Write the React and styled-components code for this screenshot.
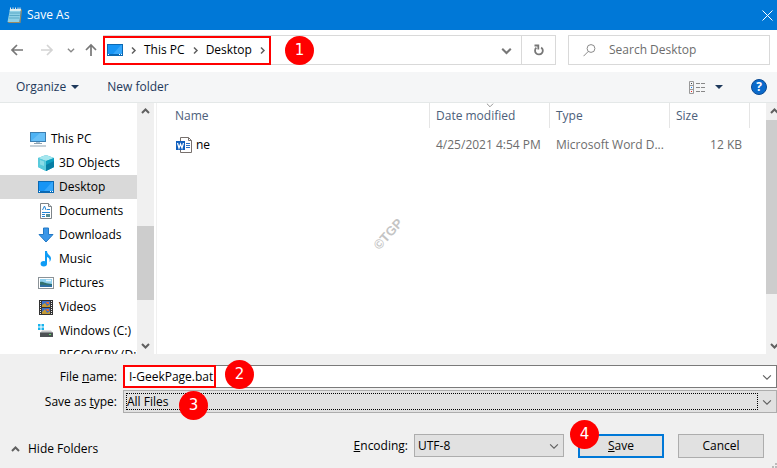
import React, { useState } from "react";
import styled, { createGlobalStyle } from "styled-components";

const places = [
  { name: "This PC", icon: "pc", root: true },
  { name: "3D Objects", icon: "cube" },
  { name: "Desktop", icon: "desktop" },
  { name: "Documents", icon: "document" },
  { name: "Downloads", icon: "download" },
  { name: "Music", icon: "music" },
  { name: "Pictures", icon: "picture" },
  { name: "Videos", icon: "video" },
  { name: "Windows (C:)", icon: "drive" },
  { name: "RECOVERY (D:)", icon: "blank" },
];

const files = [
  {
    name: "ne",
    date: "4/25/2021 4:54 PM",
    type: "Microsoft Word D...",
    size: "12 KB",
  },
];

const chevrons = {
  up: "M1 6 L4.5 2.5 L8 6",
  down: "M1 3 L4.5 6.5 L8 3",
  right: "M3 1.5 L6 4.5 L3 7.5",
};

const Chevron = ({ dir, size = 9, color = "#606060", weight = 1.5 }) => (
  <svg width={size} height={size} viewBox="0 0 9 9" fill="none">
    <path d={chevrons[dir]} stroke={color} strokeWidth={weight} />
  </svg>
);

const Arrow = ({ turn = 0, color }) => (
  <svg width="14" height="14" viewBox="0 0 14 14" fill="none">
    <path
      d="M13 7 H2 M7 2 L2 7 L7 12"
      stroke={color}
      strokeWidth="1.7"
      transform={`rotate(${turn} 7 7)`}
    />
  </svg>
);

const icons = {
  blank: null,
  pc: (
    <>
      <rect x="0.5" y="1.5" width="15" height="9" fill="#4db3f5" stroke="#3c7fb1" />
      <path d="M1 10 L10 2 H15 V10 Z" fill="#7cc8f8" opacity="0.6" />
      <path d="M6 11 H10 V12.5 H6 Z" fill="#a9c4d8" />
      <path d="M4 12.5 H12 M0 15 H16" stroke="#8fa3b1" />
    </>
  ),
  cube: (
    <>
      <path d="M8 0 L16 3 V12 L8 16 L0 12 V3 Z" fill="#35b8cf" />
      <path d="M8 0 L16 3 L8 6 L0 3 Z" fill="#a5e6ee" />
      <path d="M0 3 L8 6 V16 L0 12 Z" fill="#5acbdc" />
      <path d="M8 6 L16 3 V12 L8 16 Z" fill="#0e9fc0" />
      <path d="M8 10 L16 6 V12 L8 16 Z" fill="#087ea4" />
      <path d="M2 5 L6 6.5 V11 L2 9.5 Z" fill="#8adde7" />
    </>
  ),
  desktop: (
    <>
      <rect x="0.5" y="2.5" width="15" height="11" fill="#1795f5" stroke="#0b69b3" />
      <path d="M6 12 L14 3 H15 V12 Z" fill="#35a7fb" />
      <path d="M1 12.5 H15" stroke="#0b69b3" />
      <path d="M1 12.5 H2 M12 12.5 H13 M14 12.5 H15" stroke="#fff" />
    </>
  ),
  document: (
    <>
      <path d="M2.5 0.5 H10.5 L13.5 3.5 V15.5 H2.5 Z" fill="#fff" stroke="#7d8489" />
      <path d="M10.5 0.5 V3.5 H13.5" fill="#e2e6e9" stroke="#7d8489" />
      <path d="M4.5 7 L6.5 3 L8 7 M4 9.5 H12 M4 11.5 H7 M4 13.5 H7 M9 6.5 H12" stroke="#2385d5" fill="none" />
      <rect x="8" y="11" width="4" height="3" fill="#568d94" />
    </>
  ),
  download: (
    <path d="M5.5 1 H10.5 V7.5 H15 L8 15 L1 7.5 H5.5 Z" fill="#3b97e8" stroke="#2379c5" />
  ),
  music: (
    <>
      <path d="M7 0 H9 C9 4 13 4 13 7.5 C13 9 12 10.5 11.5 11 C12 8 11 6.5 9 6 V12.5 H7 Z" fill="#0f9cf5" />
      <ellipse cx="5.8" cy="12.8" rx="3.2" ry="2.7" fill="#0f9cf5" />
    </>
  ),
  picture: (
    <>
      <rect x="0.5" y="2.5" width="15" height="11" fill="#fff" stroke="#8b9297" />
      <rect x="2" y="4" width="12" height="8" fill="#8fd0ef" />
      <path d="M2 7 C5 6 7 9 14 9 V12 H2 Z" fill="#33716e" />
      <path d="M2 10 C6 9 10 11 14 10 V12 H2 Z" fill="#2f6fa4" />
      <path d="M8 5.5 H13" stroke="#e7f6fb" strokeWidth="1.5" />
    </>
  ),
  video: (
    <>
      <rect x="1" y="1" width="14" height="15" fill="#333" />
      <path d="M2.5 2 V16 M13.5 2 V16" stroke="#eee" strokeDasharray="1 1" />
      <path d="M4 2 H12 V8 H4 Z M4 9 H12 V15 H4 Z" fill="#3a6fc9" />
      <path d="M4 6 L7 4 L9 7 L12 5 V8 H4 Z M4 13 L7 10 L9 14 L12 12 V15 H4 Z" fill="#c59a33" />
      <path d="M8 3 H11 V5 H9 Z M8 10 H11 V12 H9 Z" fill="#e8682a" />
    </>
  ),
  drive: (
    <>
      <path d="M0 1 H2.5 V3.5 H0 Z M3.5 1 H6 V3.5 H3.5 Z M0 4.5 H2.5 V7 H0 Z M3.5 4.5 H6 V7 H3.5 Z" fill="#18b4ee" />
      <path d="M4 7.5 H13 L15 10 H2 Z" fill="#c3c6c8" />
      <rect x="2" y="9.5" width="13" height="4.5" fill="#4c5154" />
      <path d="M11 11.5 H13" stroke="#5fe06a" />
    </>
  ),
  word: (
    <>
      <path d="M4.5 0.5 H12.5 L15.5 3.5 V15.5 H4.5 Z" fill="#fff" stroke="#77706d" />
      <path d="M12.5 0.5 V3.5 H15.5" fill="none" stroke="#77706d" />
      <path d="M10 6.5 H14 M10 8.5 H14 M10 10.5 H14" stroke="#2a70c4" />
      <rect x="0" y="4" width="9" height="9" fill="#0f5fbe" />
      <path d="M1.5 6 L3 11 L4.5 7 L6 11 L7.5 6" fill="none" stroke="#fff" strokeWidth="1.2" />
    </>
  ),
  notepad: (
    <>
      <path d="M3 2 H14 L12.5 15 H0.5 Z" fill="#8fd0e6" />
      <path d="M3 2 H14 L13.8 4 H2.7 Z" fill="#d8eef2" />
      <path d="M14 2 L15 3 L13.5 16 H2 L0.5 15 H12.5 Z" fill="#9b8b62" />
      <path d="M2.7 6 H13 M2.4 8.5 H12.7 M2 11 H12.5" stroke="#5ba9c6" />
      <path d="M3.5 0.5 V3 M6 0.5 V3 M8.5 0.5 V3 M11 0.5 V3 M13 0.5 V3" stroke="#e9e9e9" />
    </>
  ),
};

const Icon = ({ name }) => (
  <svg width="16" height="16" viewBox="0 0 16 16" aria-hidden="true">
    {icons[name]}
  </svg>
);

const ScrollBar = ({ before, thumb, after }) => (
  <Track>
    <ScrollButton aria-label="Scroll up">
      <Chevron dir="up" weight={2} />
    </ScrollButton>
    <Space $grow={before} />
    <Thumb $grow={thumb} />
    <Space $grow={after} />
    <ScrollButton aria-label="Scroll down">
      <Chevron dir="down" weight={2} />
    </ScrollButton>
  </Track>
);

const App = () => {
  const [fileName, setFileName] = useState("I-GeekPage.bat");
  const [place, setPlace] = useState("Desktop");

  return (
    <>
      <GlobalStyle />
      <Dialog>
        <TitleBar>
          <Icon name="notepad" />
          <Title>Save As</Title>
          <CloseButton aria-label="Close">
            <svg width="11" height="11" viewBox="0 0 11 11">
              <path d="M0.5 0.5 L10.5 10.5 M10.5 0.5 L0.5 10.5" stroke="#fff" />
            </svg>
          </CloseButton>
        </TitleBar>

        <NavBar>
          <Moves>
            <NavButton $w={24} aria-label="Back">
              <Arrow color="#777" />
            </NavButton>
            <NavButton $w={24} aria-label="Forward">
              <Arrow color="#d4d4d4" turn={180} />
            </NavButton>
            <NavButton $w={12} aria-label="Recent locations">
              <Chevron dir="down" size={8} color="#8a8a8a" />
            </NavButton>
            <NavButton $w={16} aria-label="Up">
              <Arrow color="#777" turn={90} />
            </NavButton>
          </Moves>
          <Address>
            <Crumbs aria-label="Path">
              <Icon name="desktop" />
              <Chevron dir="right" />
              <Crumb href="#this-pc">This PC</Crumb>
              <Chevron dir="right" />
              <Crumb href="#desktop">Desktop</Crumb>
              <Chevron dir="right" />
              <CrumbsMark />
              <Badge $x={181} $y={0}>1</Badge>
            </Crumbs>
            <NavButton $w={30} aria-label="Previous locations">
              <Chevron dir="down" size={11} color="#777" weight={1.7} />
            </NavButton>
            <RefreshButton $w={34} aria-label="Refresh">
              <svg width="12" height="12" viewBox="0 0 12 12" fill="none">
                <path d="M8.2 3.4 A3.9 3.9 0 1 1 3.4 3.6" stroke="#777" strokeWidth="1.8" />
                <path d="M1.5 1.5 H5.3 V5.4" stroke="#777" strokeWidth="1.8" />
              </svg>
            </RefreshButton>
          </Address>
          <Search>
            <svg width="13" height="13" viewBox="0 0 13 13" fill="none">
              <circle cx="8" cy="4.5" r="3.9" stroke="#8a8a8a" />
              <path d="M5.2 7.5 L0.5 12.2" stroke="#8a8a8a" />
            </svg>
            <SearchInput aria-label="Search Desktop" placeholder="Search Desktop" />
          </Search>
        </NavBar>

        <ToolBar>
          <ToolButton>
            Organize
            <svg width="8" height="4" viewBox="0 0 8 4">
              <path d="M0 0 H8 L4 4 Z" fill="#1e395b" />
            </svg>
          </ToolButton>
          <ToolButton>New folder</ToolButton>
          <ViewButton aria-label="Change your view">
            <svg width="17" height="13" viewBox="0 0 17 13" fill="none">
              <path d="M0.5 0.5 H4.5 V12.5 H0.5 Z M0 4.5 H5 M0 8.5 H5" stroke="#999" />
              <path d="M7 2.5 H11 M12 2.5 H16 M7 6.5 H11 M12 6.5 H16 M7 10.5 H11 M12 10.5 H16" stroke="#888" />
              <path d="M2 2.5 H3" stroke="#444" />
              <path d="M2 6.5 H3" stroke="#0a84ff" />
              <path d="M2 10.5 H3" stroke="#e22" />
            </svg>
            <svg width="8" height="4" viewBox="0 0 8 4">
              <path d="M0 0 H8 L4 4 Z" fill="#1e395b" />
            </svg>
          </ViewButton>
          <HelpButton aria-label="Help">?</HelpButton>
        </ToolBar>

        <Content>
          <Sidebar>
            <Places>
              {places.map((p) => (
                <li key={p.name}>
                  <Place
                    $root={p.root}
                    $active={p.name === place}
                    onClick={() => setPlace(p.name)}
                  >
                    <Icon name={p.icon} />
                    {p.name}
                  </Place>
                </li>
              ))}
            </Places>
            <ScrollBar before={106} thumb={74} after={37} />
          </Sidebar>
          <FilePane>
            <FileTable>
              <thead>
                <tr>
                  <Head>Name</Head>
                  <Head $w={120}>
                    Date modified
                    <SortMark>
                      <Chevron dir="down" size={8} color="#888" weight={1} />
                    </SortMark>
                  </Head>
                  <Head $w={120}>Type</Head>
                  <Head $w={80}>Size</Head>
                  <Filler />
                </tr>
              </thead>
              <tbody>
                {files.map((f) => (
                  <tr key={f.name}>
                    <Cell>
                      <FileLabel>
                        <Icon name="word" />
                        {f.name}
                      </FileLabel>
                    </Cell>
                    <Cell>{f.date}</Cell>
                    <Cell>{f.type}</Cell>
                    <Cell $right>{f.size}</Cell>
                    <td />
                  </tr>
                ))}
              </tbody>
            </FileTable>
            <Watermark>©TGP</Watermark>
          </FilePane>
          <ScrollBar before={0} thumb={174} after={43} />
        </Content>

        <Footer>
          <Fields>
            <Label htmlFor="file-name">
              File <u>n</u>ame:
            </Label>
            <NameField>
              <NameInput
                id="file-name"
                value={fileName}
                onChange={(e) => setFileName(e.target.value)}
              />
              <FieldArrow>
                <Chevron dir="down" size={10} weight={1} />
              </FieldArrow>
              <NameMark />
              <Badge $x={101} $y={-6}>2</Badge>
            </NameField>
            <Label htmlFor="file-type">
              Save as <u>t</u>ype:
            </Label>
            <SelectField>
              <TypeSelect id="file-type">
                <option>All Files</option>
              </TypeSelect>
              <FieldArrow>
                <Chevron dir="down" size={10} weight={1} />
              </FieldArrow>
              <Badge $x={55} $y={0}>3</Badge>
            </SelectField>
          </Fields>

          <Actions>
            <HideButton>
              <Chevron dir="up" weight={2} />
              Hide Folders
            </HideButton>
            <Encoding>
              <Label htmlFor="encoding">
                <u>E</u>ncoding:
              </Label>
              <SelectField $w={150}>
                <Select id="encoding">
                  <option>UTF-8</option>
                </Select>
                <FieldArrow>
                  <Chevron dir="down" size={10} weight={1} />
                </FieldArrow>
              </SelectField>
            </Encoding>
            <SaveBox>
              <Button $primary>
                <u>S</u>ave
              </Button>
              <Badge $x={-8} $y={-14}>4</Badge>
            </SaveBox>
            <Button>Cancel</Button>
          </Actions>
          <Grip width="5" height="5" viewBox="0 0 5 5">
            <path d="M3 0 H5 V2 H3 Z M3 3 H5 V5 H3 Z M0 3 H2 V5 H0 Z" fill="#bbb" />
          </Grip>
        </Footer>
      </Dialog>
    </>
  );
};

export default App;

const GlobalStyle = createGlobalStyle`
  * {
    box-sizing: border-box;
  }

  body {
    margin: 0;
    overflow: hidden;
  }

  body, button, input, select {
    font-family: "Open Sans", "Noto Sans", sans-serif;
    font-size: 12px;
    line-height: 16px;
    color: #000;
  }

  button {
    padding: 0;
    border: 0;
    background: none;
  }

  svg {
    display: block;
    flex-shrink: 0;
  }
`;

const Dialog = styled.main`
  display: flex;
  flex-direction: column;
  height: 100vh;
  background: #fff;
`;

const TitleBar = styled.header`
  display: flex;
  align-items: center;
  height: 30px;
  padding: 0 2px 0 7px;
  gap: 4px;
  background: #0078d7;
`;

const Title = styled.h1`
  margin: 0;
  flex: 1;
  font-size: 12px;
  font-weight: 400;
  color: #fff;
`;

const CloseButton = styled.button`
  padding: 2px;
`;

const NavBar = styled.nav`
  display: flex;
  padding: 5px 7px 7px 5px;
`;

const Moves = styled.div`
  display: flex;
  gap: 6px;
  margin-right: 4px;
`;

const NavButton = styled.button`
  display: flex;
  align-items: center;
  justify-content: center;
  width: ${({ $w }) => $w}px;
`;

const Address = styled.div`
  display: flex;
  flex: 1;
  height: 30px;
  margin-right: 12px;
  border: 1px solid #d9d9d9;
`;

const Crumbs = styled.div`
  position: relative;
  display: flex;
  align-items: center;
  gap: 6px;
  margin-right: auto;
  padding: 0 4px 0 3px;
`;

const Crumb = styled.a`
  color: #000;
  text-decoration: none;
`;

const CrumbsMark = styled.div`
  position: absolute;
  inset: 0 0 -1px -1px;
  border: 2px solid #f00;
  pointer-events: none;
`;

const Badge = styled.span`
  position: absolute;
  z-index: 1;
  left: ${({ $x }) => $x}px;
  top: ${({ $y }) => $y}px;
  width: 29px;
  height: 29px;
  border-radius: 50%;
  background: #f00;
  color: #fff;
  font: 15px/29px "DejaVu Sans", sans-serif;
  text-align: center;
  pointer-events: none;
`;

const RefreshButton = styled(NavButton)`
  border-left: 1px solid #d9d9d9;
`;

const Search = styled.div`
  display: flex;
  align-items: center;
  gap: 13px;
  width: 202px;
  padding-left: 14px;
  border: 1px solid #d9d9d9;
`;

const SearchInput = styled.input`
  flex: 1;
  min-width: 0;
  padding: 0;
  border: 0;
  outline: 0;

  &::placeholder {
    color: #6d6d6d;
    opacity: 1;
  }
`;

const ToolBar = styled.div`
  display: flex;
  align-items: center;
  gap: 28px;
  height: 31px;
  padding: 0 10px 0 16px;
  background: #f5f6f7;
  border-bottom: 1px solid #e4e8e8;
`;

const ToolButton = styled.button`
  display: flex;
  align-items: center;
  gap: 5px;
  color: #1e395b;
`;

const ViewButton = styled(ToolButton)`
  gap: 9px;
  margin-left: auto;
`;

const HelpButton = styled.button`
  width: 16px;
  height: 16px;
  border: 1px solid #0a4a94;
  border-radius: 50%;
  background: #0a6acb;
  color: #fff;
  font-weight: 700;
  line-height: 14px;
`;

const Content = styled.div`
  display: flex;
  flex: 1;
  min-height: 0;
  overflow: hidden;

  & > :last-child {
    margin-right: -6px;
  }
`;

const Sidebar = styled.aside`
  display: flex;
  width: 157px;
  flex-shrink: 0;
  padding-right: 2px;
  border-right: 1px solid #f0f0f0;
`;

const Places = styled.ul`
  flex: 1;
  min-width: 0;
  margin: 0;
  padding: 24px 0 0;
  list-style: none;
  overflow: hidden;
`;

const Place = styled.button`
  display: flex;
  align-items: center;
  gap: 5px;
  width: 100%;
  height: 24px;
  padding-left: ${({ $root }) => ($root ? 30 : 38)}px;
  overflow: hidden;
  white-space: nowrap;
  background: ${({ $active }) => ($active ? "#d9d9d9" : "none")};
`;

const Track = styled.div`
  display: flex;
  flex-direction: column;
  width: 17px;
  flex-shrink: 0;
  background: #f0f0f0;
`;

const ScrollButton = styled.button`
  display: flex;
  align-items: center;
  justify-content: center;
  height: 17px;
`;

const Space = styled.div`
  flex: ${({ $grow }) => $grow} 1 0;
`;

const Thumb = styled(Space)`
  background: #cdcdcd;
`;

const FilePane = styled.section`
  position: relative;
  flex: 1;
  min-width: 0;
`;

const FileTable = styled.table`
  width: 100%;
  table-layout: fixed;
  border-collapse: separate;
  border-spacing: 0;
`;

const Head = styled.th`
  position: relative;
  width: ${({ $w }) => ($w ? `${$w}px` : "auto")};
  height: 25px;
  padding: 0 0 0 6px;
  border-right: 1px solid #e5e5e5;
  font-weight: 400;
  text-align: left;
  color: #4c607a;

  &:first-child {
    padding-left: 18px;
  }
`;

const Filler = styled.td`
  width: 16px;
`;

const SortMark = styled.span`
  position: absolute;
  top: -2px;
  left: 50%;
  transform: translateX(-50%);
`;

const Cell = styled.td`
  height: 34px;
  padding: 0 8px 0 6px;
  white-space: nowrap;
  text-align: ${({ $right }) => ($right ? "right" : "left")};
  color: #6d6d6d;

  &:nth-child(3) {
    padding-right: 0;
  }

  &:first-child {
    padding-left: 19px;
    color: #000;
  }
`;

const FileLabel = styled.span`
  display: flex;
  align-items: center;
  gap: 4px;
`;

const Watermark = styled.span`
  position: absolute;
  top: 52%;
  left: 38%;
  transform: translate(-50%, -50%) rotate(-48deg);
  font: 700 13px "Liberation Sans Narrow", "Liberation Sans", sans-serif;
  color: #c4c4c4;
`;

const Footer = styled.footer`
  position: relative;
  padding: 11px 0 10px;
  background: #f0f0f0;
`;

const Fields = styled.div`
  display: grid;
  grid-template-columns: 117px 1fr;
  gap: 2px 6px;
`;

const Label = styled.label`
  line-height: 23px;
  text-align: right;
`;

const Field = styled.div`
  position: relative;
  display: flex;
  height: 23px;
`;

const NameField = styled(Field)`
  background: #fff;
  border: 1px solid #7a7a7a;
`;

const NameInput = styled.input`
  flex: 1;
  min-width: 0;
  padding: 0 5px;
  border: 0;
  outline: 0;
  background: none;
`;

const NameMark = styled.div`
  position: absolute;
  inset: -1px auto -1px -1px;
  width: 93px;
  border: 2px solid #f00;
  pointer-events: none;
`;

const SelectField = styled(Field)`
  width: ${({ $w }) => ($w ? `${$w}px` : "auto")};
  padding: 2px 0 2px 2px;
  background: #e1e1e1;
  border: 1px solid #adadad;
`;

const Select = styled.select`
  appearance: none;
  flex: 1;
  min-width: 0;
  padding: 0 1px;
  border: 0;
  outline: 0;
  background: none;
`;

const TypeSelect = styled(Select)`
  border: 1px dotted #000;
  padding: 0;
  line-height: 15px;
`;

const FieldArrow = styled.span`
  display: flex;
  align-items: center;
  justify-content: center;
  width: 18px;
  pointer-events: none;
`;

const Actions = styled.div`
  display: flex;
  align-items: flex-start;
  gap: 14px;
  margin-top: 21px;
  padding: 0 13px 0 11px;
`;

const HideButton = styled.button`
  display: flex;
  align-items: center;
  gap: 8px;
  margin-right: auto;
  padding-top: 7px;
`;

const Encoding = styled.div`
  display: flex;
  gap: 6px;
`;

const SaveBox = styled.div`
  position: relative;
`;

const Button = styled.button`
  width: 86px;
  height: 24px;
  background: #e1e1e1;
  border: ${({ $primary }) => ($primary ? "2px solid #0078d7" : "1px solid #adadad")};
`;

const Grip = styled.svg`
  position: absolute;
  right: 0;
  bottom: 0;
`;
